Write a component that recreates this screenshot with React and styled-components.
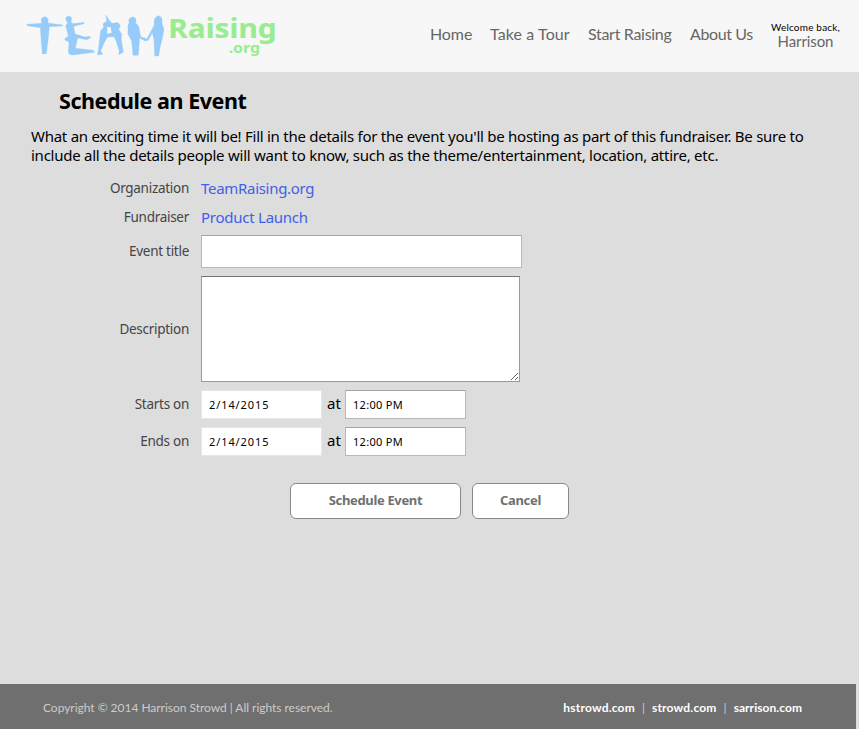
import React from "react";
import styled, { createGlobalStyle } from "styled-components";

const Global = createGlobalStyle`
  * { box-sizing: border-box; }
  html, body { margin: 0; background: #ddd; }
  body { font-family: "Noto Sans", "Open Sans", sans-serif; color: #000; }
  a { text-decoration: none; color: inherit; }
`;

const Page = styled.div`
  display: flex;
  flex-direction: column;
  height: 729px;
  overflow: hidden;
`;

const Header = styled.header`
  display: flex;
  flex: none;
  height: 72px;
  padding-left: 15px;
  background: #f7f7f7;
`;

const Logo = styled.svg`
  flex: none;
  width: 275px;
  height: 65px;
  margin-top: 5px;
`;

const Nav = styled.nav`
  display: flex;
  margin-left: 140px;
  padding-top: 23px;
  font-family: Lato, sans-serif;
  font-size: 16px;
  line-height: 22px;
  color: #666;
  white-space: nowrap;
`;

const NavLink = styled.a`
  flex: none;
  width: ${(p) => p.$width}px;
  letter-spacing: ${(p) => p.$spacing}px;
`;

const Account = styled.div`
  width: 71px;
  margin-top: -2px;
  text-align: center;
`;

const Welcome = styled.div`
  font-size: 10px;
  line-height: 12px;
  letter-spacing: 0.2px;
  color: #000;
`;

const UserName = styled.a`
  display: block;
  font-size: 15px;
  line-height: 16px;
  letter-spacing: -0.1px;
`;

const Main = styled.main`
  flex: 1;
  padding: 14px 31px 0;
`;

const Title = styled.h1`
  margin: 0 0 11px 28px;
  font-size: 21.5px;
  line-height: 30px;
  letter-spacing: -0.45px;
`;

const Intro = styled.p`
  margin: 0;
  font-size: 15px;
  line-height: 19px;
  white-space: nowrap;
`;

const IntroLine = styled.span`
  display: block;
  letter-spacing: ${(p) => p.$spacing}px;
`;

const Form = styled.form`
  margin-top: 10px;
`;

const Row = styled.div`
  display: grid;
  grid-template-columns: 158px auto;
  column-gap: 12px;
  align-items: center;
  height: ${(p) => p.$height}px;
  margin-bottom: ${(p) => p.$gap}px;
`;

const Label = styled.label`
  padding-bottom: 1px;
  text-align: right;
  font-size: 13.5px;
  line-height: 20px;
  letter-spacing: -0.28px;
  color: #444;
`;

const FieldLink = styled.a`
  padding-bottom: 2px;
  font-size: 15px;
  line-height: 20px;
  letter-spacing: ${(p) => p.$spacing}px;
  color: #4060e8;
`;

const Input = styled.input`
  width: 321px;
  height: 33px;
  margin: 0;
  border: 1px solid #b8b8b8;
  border-top-color: #a4a4a4;
  border-radius: 0;
  background: #fff;
  outline: none;
`;

const TextArea = styled.textarea`
  display: block;
  width: 319px;
  height: 106px;
  margin: 0;
  border: 1px solid #999;
  border-top-color: #737373;
  border-radius: 0;
  background: #fff;
  outline: none;
`;

const When = styled.div`
  display: flex;
  align-items: center;
`;

const WhenInput = styled(Input)`
  width: 121px;
  height: 29px;
  padding: 0 7px;
  font-family: "Noto Sans", sans-serif;
  font-size: 11px;
  letter-spacing: ${(p) => p.$spacing}px;
  border-color: ${(p) => (p.$plain ? "#e6e6e6" : "#a4a4a4 #b8b8b8 #b8b8b8")};
`;

const At = styled.span`
  width: 23px;
  padding-left: 5px;
  margin-top: -4px;
  font-size: 15px;
  line-height: 20px;
`;

const Actions = styled.div`
  display: flex;
  gap: 11px;
  margin: 27px 0 0 259px;
`;

const Button = styled.button`
  width: ${(p) => p.$width}px;
  height: 36px;
  padding: 0 0 2px;
  border: 1px solid #888;
  border-radius: 6px;
  background: #fff;
  font-family: "Noto Sans", sans-serif;
  font-size: 13px;
  font-weight: 700;
  letter-spacing: -0.35px;
  color: #707070;
`;

const Footer = styled.footer`
  display: flex;
  flex: none;
  justify-content: space-between;
  width: 856px;
  height: 45px;
  padding: 0 54px 0 43px;
  background: #6f6f6f;
  font-family: Lato, sans-serif;
  font-size: 12px;
  line-height: 47px;
  color: #ccc;
  white-space: nowrap;
`;

const Copyright = styled.div`
  letter-spacing: -0.03px;
`;

const Sites = styled.div`
  display: flex;
  gap: 7px;
`;

const Site = styled.a`
  color: #fff;
  font-weight: 700;
  letter-spacing: ${(p) => p.$spacing}px;
`;

function TeamLogo() {
  return (
    <Logo viewBox="0 0 825 195" role="img" aria-label="TEAM Raising.org">
      <g fill="#96cbfa" stroke="#96cbfa" strokeLinejoin="round" strokeLinecap="round">
        <path d="M36 58 L80 55 Q75 36 89 35 Q102 36 99 54 L143 60 L143 63 L103 65 L100 98 L94 146 L82 147 L78 99 L76 68 L37 62 Z" />
        <path d="M153 46 Q149 34 162 33 Q174 36 168 50 L174 56 L207 52 L207 56 L176 64 L180 87 L210 96 L225 94 L227 98 L215 104 L188 99 L181 130 L236 136 L239 142 L173 150 Q160 150 160 139 L162 111 L150 105 L149 101 L160 94 L152 62 L158 53 Z" />
        <path d="M273 31 L288 53 L296 55 Q311 48 316 63 L311 73 L320 88 L319 104 L325 142 L311 149 L313 138 L304 110 L297 95 L277 96 L267 115 L257 137 L263 148 L247 150 L251 128 L254 99 L257 77 L266 67 L264 56 L275 49 Z" />
        <path d="M342 54 Q338 38 353 36 Q367 38 362 54 L371 64 L377 95 L396 101 L418 60 Q414 37 430 32 Q444 34 441 55 L447 74 L442 99 L436 123 L431 153 L419 153 L417 104 L412 83 L400 106 L390 108 L374 99 L370 151 L354 151 L350 108 L339 88 L339 62 Z" />
        <path d="M276 65 L287 67 L290 83 L277 87 Z" fill="#f7f7f7" stroke="none" />
      </g>
      <g fill="#98ed90" stroke="#98ed90" fontFamily="Noto Sans" fontWeight="700">
        <text x="460" y="100" fontSize="80" strokeWidth="0.5" textLength="325" lengthAdjust="spacingAndGlyphs">Raising</text>
        <text x="641" y="144" fontSize="44" strokeWidth="0" textLength="94" lengthAdjust="spacingAndGlyphs">.org</text>
      </g>
    </Logo>
  );
}

export default function App() {
  return (
    <Page>
      <Global />
      <Header>
        <TeamLogo />
        <Nav>
          <NavLink href="#" $width={60} $spacing={-0.1}>Home</NavLink>
          <NavLink href="#" $width={98} $spacing={0.1}>Take a Tour</NavLink>
          <NavLink href="#" $width={102} $spacing={-0.3}>Start Raising</NavLink>
          <NavLink href="#" $width={80} $spacing={-0.4}>About Us</NavLink>
          <Account>
            <Welcome>Welcome back,</Welcome>
            <UserName href="#">Harrison</UserName>
          </Account>
        </Nav>
      </Header>
      <Main>
        <Title>Schedule an Event</Title>
        <Intro>
          <IntroLine $spacing={-0.26}>What an exciting time it will be! Fill in the details for the event you'll be hosting as part of this fundraiser. Be sure to</IntroLine>
          <IntroLine $spacing={-0.25}>include all the details people will want to know, such as the theme/entertainment, location, attire, etc.</IntroLine>
        </Intro>
        <Form>
          <Row $height={27} $gap={2}>
            <Label>Organization</Label>
            <FieldLink href="#" $spacing={-0.3}>TeamRaising.org</FieldLink>
          </Row>
          <Row $height={27} $gap={4}>
            <Label>Fundraiser</Label>
            <FieldLink href="#" $spacing={-0.25}>Product Launch</FieldLink>
          </Row>
          <Row $height={33} $gap={8}>
            <Label htmlFor="title">Event title</Label>
            <Input id="title" />
          </Row>
          <Row $height={106} $gap={8}>
            <Label htmlFor="description">Description</Label>
            <TextArea id="description" />
          </Row>
          <Row $height={29} $gap={8}>
            <Label>Starts on</Label>
            <When>
              <WhenInput $plain $spacing={0.9} defaultValue="2/14/2015" />
              <At>at</At>
              <WhenInput $spacing={0.3} defaultValue="12:00 PM" />
            </When>
          </Row>
          <Row $height={29} $gap={0}>
            <Label>Ends on</Label>
            <When>
              <WhenInput $plain $spacing={0.9} defaultValue="2/14/2015" />
              <At>at</At>
              <WhenInput $spacing={0.3} defaultValue="12:00 PM" />
            </When>
          </Row>
          <Actions>
            <Button type="button" $width={171}>Schedule Event</Button>
            <Button type="button" $width={97}>Cancel</Button>
          </Actions>
        </Form>
      </Main>
      <Footer>
        <Copyright>Copyright © 2014 Harrison Strowd | All rights reserved.</Copyright>
        <Sites>
          <Site href="#" $spacing={0.2}>hstrowd.com</Site>
          <span>|</span>
          <Site href="#" $spacing={0.2}>strowd.com</Site>
          <span>|</span>
          <Site href="#" $spacing={0.05}>sarrison.com</Site>
        </Sites>
      </Footer>
    </Page>
  );
}
